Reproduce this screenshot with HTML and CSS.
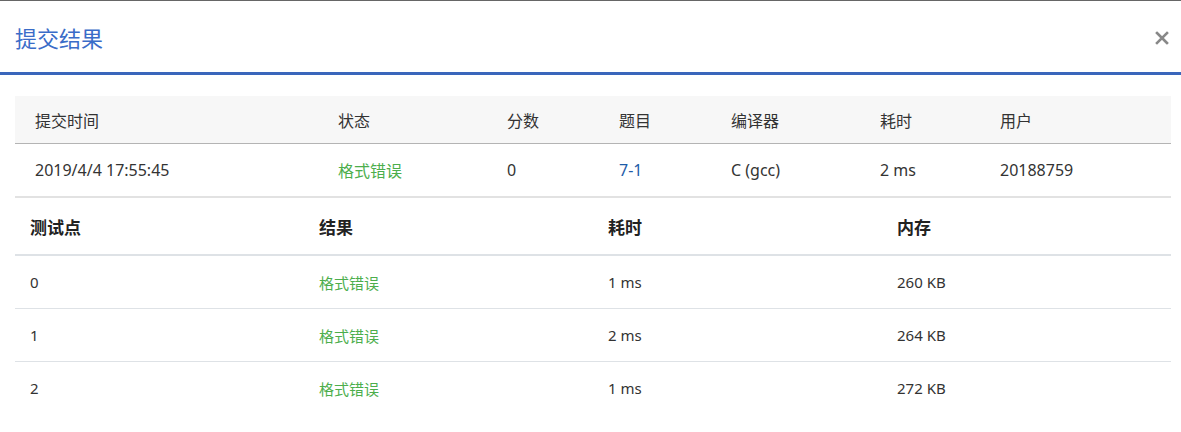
FILE: index.html
```html
<!DOCTYPE html>
<html lang="zh-CN">
<head>
    <meta charset="UTF-8">
    <meta name="viewport" content="width=device-width, initial-scale=1.0">
    <title>提交结果</title>
    <link rel="stylesheet" href="styles.css">
</head>
<body>
    <div class="modal">
        <div class="modal-header">
            <h3 class="modal-title">提交结果</h3>
            <button class="close" type="button" aria-label="关闭">
                <svg width="14" height="14" viewBox="0 0 14 14">
                    <path d="M2 2 L12 12 M12 2 L2 12" stroke="#888" stroke-width="2.6" stroke-linecap="square"/>
                </svg>
            </button>
        </div>
        <div class="modal-body">
            <table class="summary">
                <thead>
                    <tr>
                        <th class="c-time">提交时间</th>
                        <th class="c-status">状态</th>
                        <th class="c-score">分数</th>
                        <th class="c-problem">题目</th>
                        <th class="c-compiler">编译器</th>
                        <th class="c-cost">耗时</th>
                        <th class="c-user">用户</th>
                    </tr>
                </thead>
                <tbody>
                    <tr>
                        <td>2019/4/4 17:55:45</td>
                        <td class="status">格式错误</td>
                        <td>0</td>
                        <td><a href="#" class="problem">7-1</a></td>
                        <td>C (gcc)</td>
                        <td>2 ms</td>
                        <td>20188759</td>
                    </tr>
                </tbody>
            </table>
            <table class="cases">
                <thead>
                    <tr>
                        <th>测试点</th>
                        <th>结果</th>
                        <th>耗时</th>
                        <th>内存</th>
                    </tr>
                </thead>
                <tbody>
                    <tr>
                        <td>0</td>
                        <td class="status">格式错误</td>
                        <td>1 ms</td>
                        <td>260 KB</td>
                    </tr>
                    <tr>
                        <td>1</td>
                        <td class="status">格式错误</td>
                        <td>2 ms</td>
                        <td>264 KB</td>
                    </tr>
                    <tr>
                        <td>2</td>
                        <td class="status">格式错误</td>
                        <td>1 ms</td>
                        <td>272 KB</td>
                    </tr>
                </tbody>
            </table>
        </div>
    </div>
</body>
</html>
```

FILE: styles.css
```css
body {
    margin: 0;
    padding: 0;
    background-color: #fff;
    font-family: "Noto Sans", "Noto Sans CJK SC", sans-serif;
    color: #333;
}
.modal {
    border-top: 1px solid #666;
}
.modal-header {
    height: 71px;
    display: flex;
    align-items: center;
    justify-content: space-between;
    padding: 0 12px 0 15px;
    border-bottom: 3px solid #3a66bb;
}
.modal-title {
    margin: 0;
    font-size: 22px;
    font-weight: normal;
    color: #3a6cc8;
}
.close {
    border: 0;
    background: none;
    padding: 0;
    margin-top: 2px;
    display: flex;
    cursor: pointer;
}
.modal-body {
    padding: 21px 10px 0 15px;
}
table {
    width: 100%;
    border-collapse: collapse;
}
.summary th,
.summary td {
    text-align: left;
    padding: 0 0 0 20px;
    font-size: 16px;
    white-space: nowrap;
}
.summary th {
    height: 47px;
    background-color: #f7f7f7;
    font-weight: normal;
    color: #333;
    border-bottom: 1px solid #b4b4b4;
}
.summary td {
    height: 52px;
    border-bottom: 2px solid #e2e2e2;
}
.c-time { width: 283px; }
.c-status { width: 149px; }
.c-score { width: 92px; }
.c-problem { width: 92px; }
.c-compiler { width: 129px; }
.c-cost { width: 100px; }
.problem {
    color: #1e5ca8;
    text-decoration: none;
}
.cases {
    table-layout: fixed;
}
.cases th,
.cases td {
    text-align: left;
    padding: 0 15px;
}
.cases th {
    height: 56px;
    font-size: 17px;
    font-weight: bold;
    color: #222;
    border-bottom: 2px solid #dee2e6;
}
.cases td {
    height: 52px;
    font-size: 15px;
    color: #333;
    border-bottom: 1px solid #dee2e6;
}
.cases tr:last-child td {
    border-bottom: 0;
}
.summary .status,
.cases .status {
    color: #4cae4c;
}
```
